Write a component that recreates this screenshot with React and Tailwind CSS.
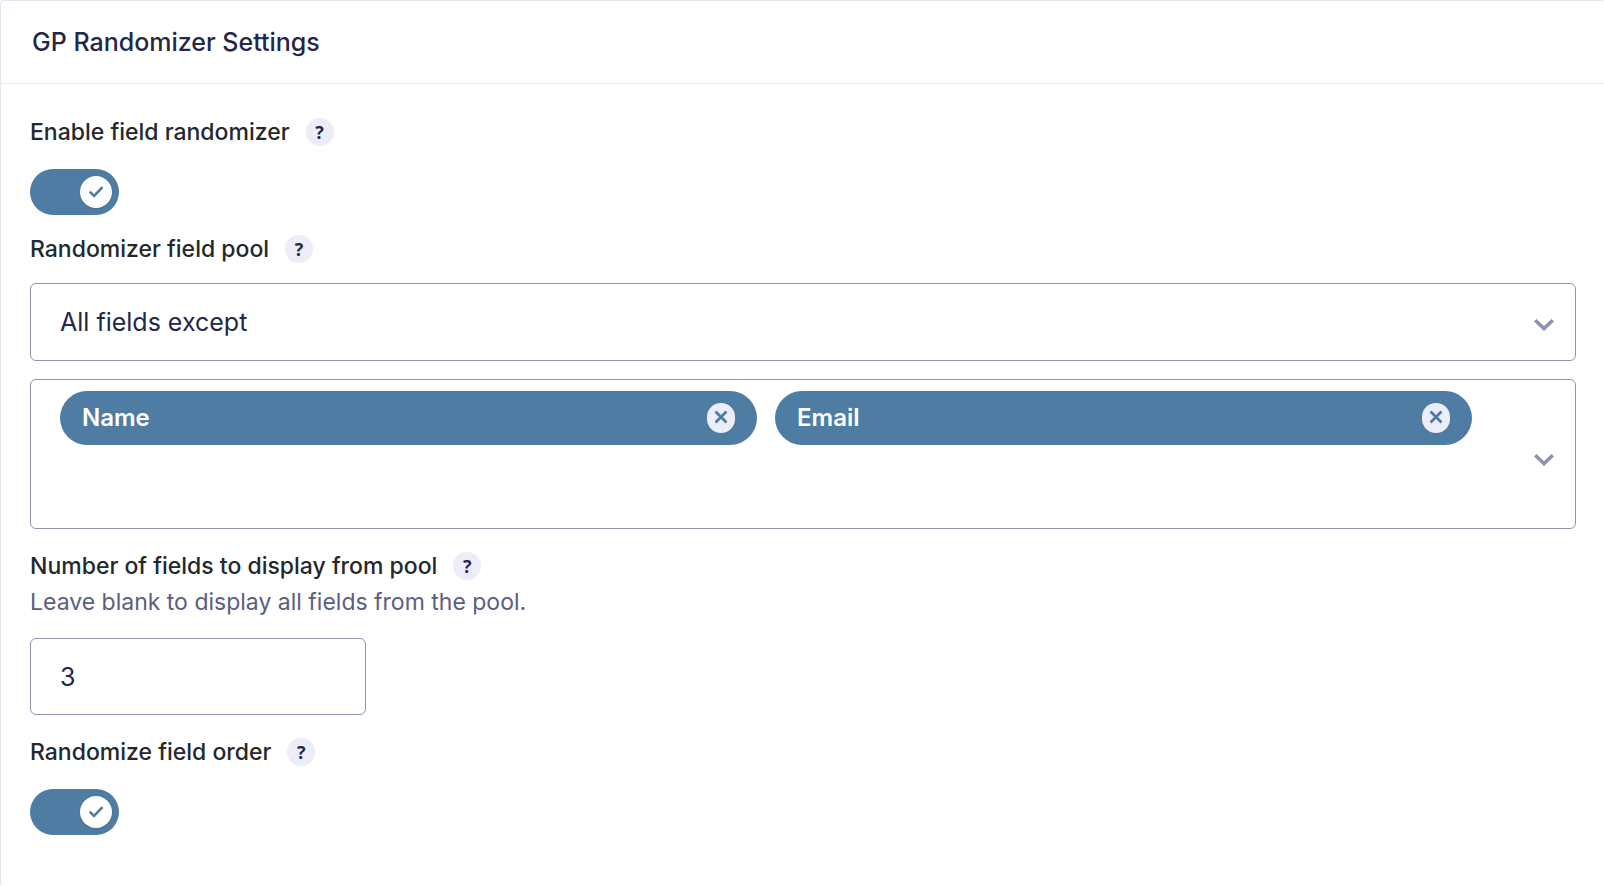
import { useState } from 'react';

const initialTags = ['Name', 'Email'];

const HelpBadge = ({ label }) => (
  <button
    type="button"
    aria-label={`Help: ${label}`}
    className="flex size-7 shrink-0 items-center justify-center rounded-full bg-[#ecedf8] font-['Open_Sans',sans-serif] text-lg leading-7 font-bold text-[#242748]"
  >
    ?
  </button>
);

const FieldLabel = ({ htmlFor, children }) => (
  <div className="flex items-center gap-4">
    <label htmlFor={htmlFor} className="text-[23px] leading-7 font-medium text-[#23282d]">
      {children}
    </label>
    <HelpBadge label={children} />
  </div>
);

const Toggle = ({ id, checked, onChange }) => (
  <label htmlFor={id} className="relative block h-[46px] w-[89px] cursor-pointer">
    <input
      id={id}
      type="checkbox"
      checked={checked}
      onChange={(e) => onChange(e.target.checked)}
      className="peer block size-full cursor-pointer appearance-none rounded-full bg-gray-300 checked:bg-[#4f7ca3]"
    />
    <span className="pointer-events-none absolute top-[7px] left-[7px] flex size-8 items-center justify-center rounded-full bg-white shadow-sm peer-checked:left-[50px]">
      {checked && (
        <svg viewBox="0 0 32 32" className="size-8" fill="none" stroke="#4f7ca3" strokeWidth="2.6">
          <path d="M9.7 15.6l4.4 4.4 8.4-8.8" />
        </svg>
      )}
    </span>
  </label>
);

const Chevron = () => (
  <svg viewBox="0 0 20 12" className="h-3 w-5" fill="none" stroke="#9092b2" strokeWidth="3.6">
    <path d="M1.2 1.2L10 9.6l8.8-8.4" />
  </svg>
);

const Tag = ({ name, onRemove }) => (
  <li className="flex h-[54px] flex-1 items-center justify-between rounded-full bg-[#4f7ca3] px-[22px] text-2xl font-semibold text-white">
    {name}
    <button
      type="button"
      aria-label={`Remove ${name}`}
      onClick={onRemove}
      className="flex h-[30px] w-7 items-center justify-center rounded-full bg-[#ecedf8]"
    >
      <svg viewBox="0 0 28 30" className="h-[30px] w-7" fill="none" stroke="#4f7ca3" strokeWidth="2.8">
        <path d="M8.5 8.5l11 11M19.5 8.5l-11 11" />
      </svg>
    </button>
  </li>
);

export default function App() {
  const [enabled, setEnabled] = useState(true);
  const [pool, setPool] = useState('except');
  const [tags, setTags] = useState(initialTags);
  const [count, setCount] = useState('3');
  const [randomOrder, setRandomOrder] = useState(true);

  return (
    <section className="min-h-screen rounded border-t border-l border-[#e2e4f0] bg-white font-['Inter',sans-serif]">
      <header className="border-b border-[#e6e8ee] px-[31px] py-6">
        <h1 className="text-[25px] leading-[34px] font-medium text-[#242748]">GP Randomizer Settings</h1>
      </header>

      <div className="pt-[34px] pr-7 pb-12 pl-[29px]">
        <FieldLabel htmlFor="enable">Enable field randomizer</FieldLabel>
        <div className="mt-[23px]">
          <Toggle id="enable" checked={enabled} onChange={setEnabled} />
        </div>

        <div className="mt-5">
          <FieldLabel htmlFor="pool">Randomizer field pool</FieldLabel>
          <div className="relative mt-5">
            <select
              id="pool"
              value={pool}
              onChange={(e) => setPool(e.target.value)}
              className="block h-[78px] w-full appearance-none rounded-md border border-[#9092b2] bg-white px-[29px] pt-0.5 text-[25px] text-[#242748]"
            >
              <option value="except">All fields except</option>
              <option value="all">All fields</option>
            </select>
            <span className="pointer-events-none absolute inset-y-0 right-[22px] flex items-center pt-1.5">
              <Chevron />
            </span>
          </div>

          <div className="mt-[18px] flex min-h-[150px] items-center justify-between gap-[62px] rounded-md border border-[#9092b2] pr-[21px] pl-[29px]">
            <ul className="flex flex-1 gap-[18px] self-start pt-[11px]">
              {tags.map((tag) => (
                <Tag key={tag} name={tag} onRemove={() => setTags(tags.filter((t) => t !== tag))} />
              ))}
            </ul>
            <span className="pt-3">
              <Chevron />
            </span>
          </div>
        </div>

        <div className="mt-[23px]">
          <FieldLabel htmlFor="count">Number of fields to display from pool</FieldLabel>
          <p className="mt-2 text-[23px] leading-7 text-[#5b5e80]">
            Leave blank to display all fields from the pool.
          </p>
          <input
            id="count"
            type="text"
            inputMode="numeric"
            value={count}
            onChange={(e) => setCount(e.target.value)}
            className="mt-[22px] block h-[77px] w-[336px] rounded-md border border-[#9092b2] px-[29px] text-[25px] text-[#242748]"
          />
        </div>

        <div className="mt-[23px]">
          <FieldLabel htmlFor="order">Randomize field order</FieldLabel>
          <div className="mt-[23px]">
            <Toggle id="order" checked={randomOrder} onChange={setRandomOrder} />
          </div>
        </div>
      </div>
    </section>
  );
}
